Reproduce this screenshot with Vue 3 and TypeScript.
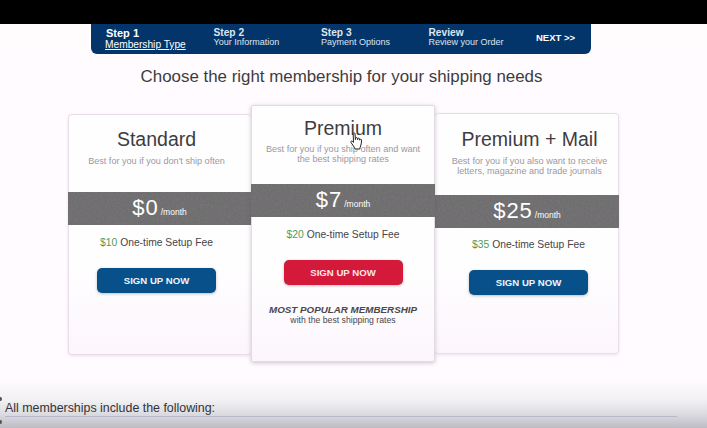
<script setup lang="ts">
interface Step {
  title: string
  sub: string
  active?: boolean
}

interface Plan {
  name: string
  blurb: string[]
  price: string
  setup: string
  variant: string
}

const steps: Step[] = [
  { title: 'Step 1', sub: 'Membership Type', active: true },
  { title: 'Step 2', sub: 'Your Information' },
  { title: 'Step 3', sub: 'Payment Options' },
  { title: 'Review', sub: 'Review your Order' },
]

const plans: Plan[] = [
  {
    name: 'Standard',
    blurb: ["Best for you if you don't ship often"],
    price: '$0',
    setup: '$10',
    variant: 'standard',
  },
  {
    name: 'Premium',
    blurb: ['Best for you if you ship often and want', 'the best shipping rates'],
    price: '$7',
    setup: '$20',
    variant: 'featured',
  },
  {
    name: 'Premium + Mail',
    blurb: ['Best for you if you also want to receive', 'letters, magazine and trade journals'],
    price: '$25',
    setup: '$35',
    variant: 'mail',
  },
]
</script>

<template>
  <div class="page">
    <div class="blackbar"></div>

    <nav class="steps">
      <div v-for="step in steps" :key="step.title" class="step" :class="{ active: step.active }">
        <strong>{{ step.title }}</strong>
        <span>{{ step.sub }}</span>
      </div>
      <div class="next">NEXT &gt;&gt;</div>
    </nav>

    <h1 class="heading">Choose the right membership for your shipping needs</h1>

    <svg class="defs" width="0" height="0">
      <filter id="grain" x="0" y="0" width="100%" height="100%">
        <feTurbulence type="fractalNoise" baseFrequency="0.55" numOctaves="2" seed="4" />
        <feColorMatrix values="0 0 0 0 0.2  0 0 0 0 0.2  0 0 0 0 0.2  1.1 0 0 0 -0.3" />
      </filter>
    </svg>

    <div class="plans">
      <section v-for="plan in plans" :key="plan.name" class="plan" :class="plan.variant">
        <div class="plan-top">
          <h2>{{ plan.name }}</h2>
          <p v-for="line in plan.blurb" :key="line">{{ line }}</p>
        </div>
        <div class="price">
          <svg class="grain" width="100%" height="100%"><rect width="100%" height="100%" filter="url(#grain)" /></svg>
          <span class="amount">{{ plan.price }}</span>
          <span class="per">/month</span>
        </div>
        <div class="plan-body">
          <div class="setup"><em>{{ plan.setup }}</em> One-time Setup Fee</div>
          <button class="signup" type="button">SIGN UP NOW</button>
          <div v-if="plan.variant === 'featured'" class="popular">
            <b>MOST POPULAR MEMBERSHIP</b>
            <span>with the best shipping rates</span>
          </div>
        </div>
      </section>
    </div>

    <svg class="cursor" width="14" height="19" viewBox="0 0 14 19">
      <path
        d="M3.2 1.6c0-1 1.7-1 1.8 0l.4 6 .3-1.4c.2-.9 1.6-.8 1.7.1l.2 1.4.3-1c.3-.8 1.5-.7 1.6.2l.2 1.3.4-.6c.4-.7 1.5-.3 1.5.5 0 2.600-.5 5-1.500 7.400l-.3 1.500H5l-.5-1.500L1 10.500c-.6-.8.4-1.900 1.300-1.200l1.200 1.100z"
        fill="#fff"
        stroke="#222"
        stroke-width="1"
        stroke-linejoin="round"
      />
    </svg>

    <footer class="includes">
      <p>All memberships include the following:</p>
    </footer>
    <i class="edge-dot top"></i>
    <i class="edge-dot low"></i>
  </div>
</template>

<style>
html,
body {
  margin: 0;
  background: #fffcfe;
}
</style>

<style scoped>
.page {
  position: relative;
  width: 707px;
  height: 428px;
  overflow: hidden;
  font-family: 'Liberation Sans', Arial, sans-serif;
  background: linear-gradient(#fffcfe 0, #fffbfe 380px, #f1f0f3 400px, #dcdbe0 414px, #bdbcc4 428px);
}

.blackbar {
  height: 24px;
  background: #000;
}

.steps {
  display: flex;
  align-items: center;
  box-sizing: border-box;
  width: 500px;
  height: 30px;
  margin-left: 91px;
  padding: 0 0 0 15px;
  background: #03356b;
  border-radius: 0 0 6px 6px;
  color: #dfe5ee;
}

.step {
  display: flex;
  flex-direction: column;
  flex: none;
  width: 107.500px;
  padding-bottom: 3px;
  font-size: 9px;
  line-height: 9px;
}

.step strong {
  font-size: 10.200px;
  line-height: 10px;
}

.step.active {
  padding-bottom: 0;
  line-height: 12px;
  color: #fff;
}

.step.active strong {
  font-size: 11px;
  line-height: 12px;
}

.step.active span {
  font-size: 10.200px;
  text-decoration: underline;
  margin-left: -1px;
}

.next {
  flex: none;
  white-space: nowrap;
  padding-bottom: 3px;
  font-size: 9.500px;
  font-weight: 700;
  color: #fff;
}

.heading {
  margin: 12px 0 0;
  text-align: center;
  font-size: 16.900px;
  line-height: 22px;
  font-weight: 400;
  color: #3c3c3e;
  padding-right: 24px;
}

.plans {
  display: flex;
  align-items: flex-start;
  margin: 17px 0 0 68px;
}

.plan {
  box-sizing: border-box;
  flex: none;
  width: 184px;
  background: linear-gradient(#fffeff 65%, #fcf6fc);
  text-align: center;
  border: 1px solid #e9dde9;
  border-radius: 4px;
  box-shadow: 0 1px 3px rgba(150, 100, 160, 0.18);
}

.standard {
  width: 183px;
  height: 241px;
  margin-top: 9px;
  border-right: 0;
}

.featured {
  position: relative;
  z-index: 1;
  height: 257px;
  border-color: #e2dbe4;
  box-shadow: 0 1px 4px rgba(90, 70, 100, 0.3);
  border-radius: 2px;
}

.mail {
  height: 241px;
  margin-top: 8px;
  border-left: 0;
}

.plan-top {
  box-sizing: border-box;
  height: 78px;
  padding-top: 12px;
}

.standard .plan-top {
  height: 77px;
  padding-right: 7px;
}

.standard .plan-body {
  padding-right: 7px;
}

.featured .plan-top {
  padding-top: 10px;
}

.mail .plan-top {
  height: 81px;
  padding-top: 13px;
  padding-left: 6px;
}

.mail .plan-body {
  padding-left: 4px;
}

.plan-top h2 {
  margin: 0 0 5px;
  font-size: 19.500px;
  line-height: 24px;
  font-weight: 400;
  color: #3d3d40;
}

.featured .plan-top h2 {
  margin-bottom: 4px;
}

.plan-top p {
  margin: 0;
  font-size: 9.100px;
  line-height: 10px;
  color: #9b98a0;
}

.price {
  position: relative;
  display: flex;
  align-items: baseline;
  justify-content: center;
  height: 33px;
  line-height: 31px;
  margin: 0 -1px;
  color: #fff;
  background-color: #6e6c6e;
}

.standard .price {
  margin-right: 0;
}

.mail .price {
  margin-left: 0;
}

.grain {
  position: absolute;
  left: 0;
  top: 0;
}

.defs {
  position: absolute;
}

.amount,
.per {
  position: relative;
}

.amount {
  font-size: 22px;
  letter-spacing: 1px;
}

.per {
  margin-left: 2px;
  font-size: 8.500px;
}

.setup {
  margin-top: 11px;
  font-size: 10.300px;
  line-height: 14px;
  color: #454548;
}

.setup em {
  font-style: normal;
  color: #4f9a58;
}

.mail .setup {
  margin-top: 10px;
}

.signup {
  display: block;
  width: 119px;
  height: 25px;
  margin: 18px auto 0;
  padding: 0;
  border: 0;
  border-radius: 5px;
  background: #07508a;
  color: #f0f5fa;
  font: 700 9.600px 'Liberation Sans', Arial, sans-serif;
  box-shadow: 0 1px 3px rgba(0, 0, 0, 0.25);
}

.featured .signup {
  background: #d5193a;
  color: #fbe6ea;
}

.popular {
  margin-top: 20px;
  line-height: 10px;
  color: #49474c;
}

.popular b {
  display: block;
  font-style: italic;
  font-size: 9.800px;
}

.popular span {
  display: block;
  font-size: 8.700px;
}

.cursor {
  position: absolute;
  left: 350px;
  top: 132px;
  z-index: 2;
}

.includes {
  position: absolute;
  left: 5px;
  right: 30px;
  top: 401px;
  border-bottom: 1px solid #b5b9cb;
  height: 15px;
}

.includes p {
  margin: 0;
  font-size: 12.400px;
  line-height: 15px;
  color: #333338;
}

.edge-dot {
  position: absolute;
  left: -1px;
  width: 3px;
  height: 4px;
  border-radius: 50%;
  background: #555;
}

.edge-dot.top {
  top: 397px;
}

.edge-dot.low {
  top: 420px;
}
</style>
